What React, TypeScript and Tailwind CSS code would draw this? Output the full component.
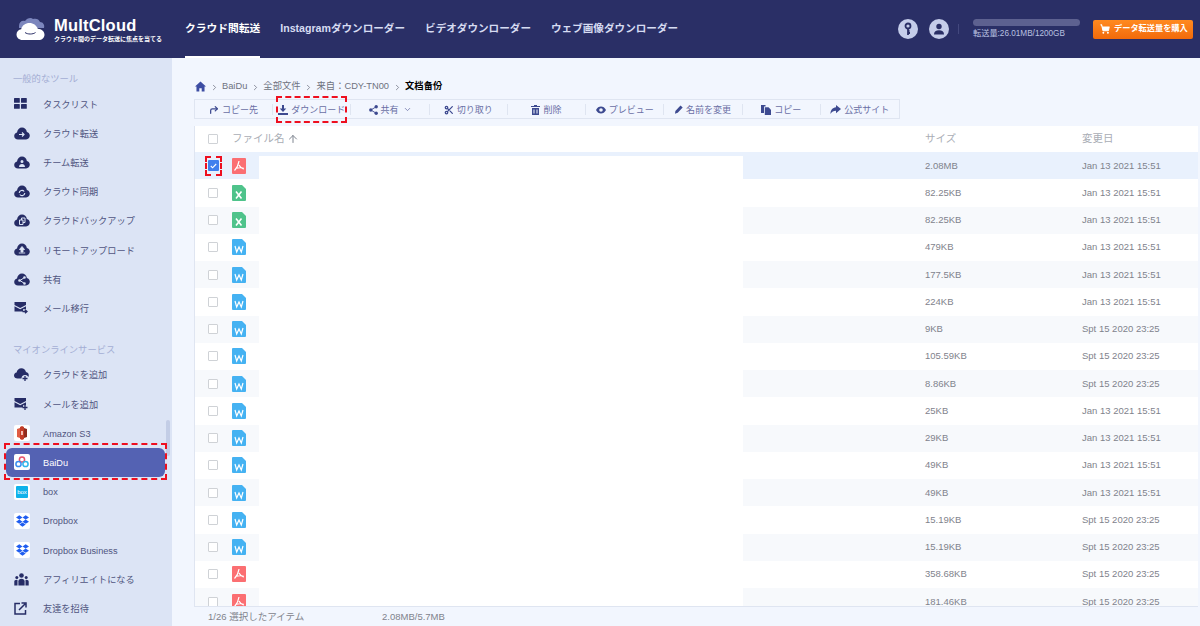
import { ArrowUp, ChevronDown, ChevronRight, CornerUpRight, Scissors, ShoppingCart } from "lucide-react";

const font = "font-['Liberation_Sans','Noto_Sans_CJK_JP',sans-serif]";

const CloudBase = ({ children }: { children?: React.ReactNode }) => (
  <svg width="16" height="13" viewBox="0 0 16 13" className="shrink-0">
    <path d="M4 12.5C1.8 12.5 0.2 11 0.2 9c0-1.8 1.2-3.1 2.8-3.4C3.4 2.6 5.4 0.6 8 0.6c2.500 0 4.400 1.800 4.900 4.300 1.700 0.300 2.900 1.900 2.900 3.700 0 2.200-1.600 3.900-3.700 3.900z" fill="#262c66" />
    {children}
  </svg>
);

const GridIcon = () => (
  <svg width="13" height="11" viewBox="0 0 13 11">
    <rect x="0" y="0" width="5.800" height="4.800" rx="0.600" fill="#262c66" />
    <rect x="7" y="0" width="5.800" height="4.800" rx="0.600" fill="#262c66" />
    <rect x="0" y="6" width="5.800" height="4.800" rx="0.600" fill="#262c66" />
    <rect x="7" y="6" width="5.800" height="4.800" rx="0.600" fill="#262c66" />
  </svg>
);

const MailIcon = ({ plus }: { plus?: boolean }) => (
  <svg width="14" height="14" viewBox="0 0 14 14">
    <path d="M0.500 1h11.500v3L6.200 7 0.500 4z" fill="#262c66" />
    <path d="M0.500 5.200l5.700 3 5.800-3v3H9v2.300H0.500z" fill="#262c66" />
    <path d={plus ? "M11 8v5M8.500 10.500h5" : "M8.500 10.500h4.500M11 8.700l2 1.800-2 1.800"} stroke="#262c66" strokeWidth="1.300" fill="none" />
  </svg>
);

const PeopleIcon = () => (
  <svg width="15" height="13" viewBox="0 0 15 13" fill="#262c66">
    <circle cx="7.500" cy="2.500" r="2.300" />
    <circle cx="2.800" cy="4.400" r="1.500" />
    <circle cx="12.200" cy="4.400" r="1.500" />
    <path d="M4.400 12.500V8.300c0-1.500 1.300-2.500 3.100-2.500s3.100 1 3.100 2.500v4.200z" />
    <path d="M0.300 12.500V8.600c0-1.100 0.900-1.800 2.600-1.800l0.600 0.100v5.600zM14.700 12.500V8.600c0-1.100-0.900-1.800-2.600-1.800l-0.600 0.100v5.600z" />
  </svg>
);

const InviteIcon = () => (
  <svg width="13" height="13" viewBox="0 0 13 13" fill="none" stroke="#262c66" strokeWidth="1.500">
    <path d="M6 1.500H1v10.500h10.500V8" />
    <path d="M5 8l6-6M7.500 1h4.500v4.500" />
  </svg>
);

const AmazonIcon = () => (
  <svg width="12" height="14" viewBox="0 0 12 14">
    <path d="M1 3l3-1v10l-3-1z" fill="#e05c44" />
    <path d="M11 3L8 2v10l3-1z" fill="#8f2c1d" />
    <path d="M4 1l2-1 2 1v12l-2 1-2-1z" fill="#c33c27" />
    <rect x="5" y="5" width="2" height="4" fill="#f3c0b5" />
  </svg>
);

const BaiduIcon = () => (
  <svg width="14" height="12" viewBox="0 0 14 12" fill="none" strokeWidth="1.500">
    <circle cx="7" cy="3.500" r="2.600" stroke="#e9546b" />
    <circle cx="3.500" cy="8" r="2.600" stroke="#3a8df0" />
    <circle cx="10.500" cy="8" r="2.600" stroke="#2fb6ea" />
  </svg>
);

const BoxIcon = () => (
  <div className="w-[12px] h-[12px] rounded-[1px] bg-[#10b2ea] flex items-center justify-center text-white text-[6px] leading-none">box</div>
);

const DropboxIcon = () => (
  <svg width="13" height="12" viewBox="0 0 13 12" fill="#1f5df0">
    <path d="M3.300 0.300L0 2.500l3.300 2.100 3.200-2.100zM9.700 0.300L6.500 2.500l3.200 2.100L13 2.500zM0 6.700l3.300 2.100 3.200-2.100-3.200-2.100zM9.700 4.600L6.500 6.700l3.200 2.100L13 6.700zM3.300 9.500l3.200 2.200 3.200-2.200-3.200-2.100z" />
  </svg>
);

const Tile = ({ children }: { children: React.ReactNode }) => (
  <div className="w-[16px] h-[16px] rounded-[2px] bg-white flex items-center justify-center">{children}</div>
);

const CloudGlyph = ({ kind }: { kind: string }) => (
  <CloudBase>
    {kind === "transfer" && <path d="M5 7.500h5M8 5.500l2 2-2 2" stroke="#dce4f5" strokeWidth="1.200" fill="none" />}
    {kind === "team" && <path d="M8 4a1.500 1.500 0 1 0 0 3 1.500 1.500 0 0 0 0-3zM5 11c0-2 1.300-3 3-3s3 1 3 3z" fill="#dce4f5" />}
    {kind === "sync" && <path d="M5.200 8a2.800 2.800 0 0 1 5-1.500M10.800 8a2.800 2.800 0 0 1-5 1.500" stroke="#dce4f5" strokeWidth="1.100" fill="none" />}
    {kind === "backup" && <path d="M5.500 6h3.500v4.500H5.500zM7.500 6V4h3.500v4.500H9" stroke="#dce4f5" strokeWidth="1" fill="none" />}
    {kind === "upload" && <path d="M8 3.500l2.500 3h-1.500v2.500H7V6.500H5.500zM4.800 10h6.400" stroke="#dce4f5" strokeWidth="0.900" fill="#dce4f5" />}
    {kind === "share" && <path d="M10.500 4.500L6 7.500l4.500 3" stroke="#dce4f5" strokeWidth="1" fill="none" />}
    {kind === "share" && <path d="M10.500 3.200a1.300 1.300 0 1 0 0 2.600 1.300 1.300 0 0 0 0-2.600zM5.500 6.200a1.300 1.300 0 1 0 0 2.600 1.300 1.300 0 0 0 0-2.600zM10.500 9.200a1.300 1.300 0 1 0 0 2.600 1.300 1.300 0 0 0 0-2.600z" fill="#dce4f5" />}
  </CloudBase>
);

const AddCloudIcon = () => (
  <svg width="15" height="14" viewBox="0 0 15 14">
    <path d="M3.500 10.500C1.500 10.500 0 9.200 0 7.400c0-1.600 1.100-2.800 2.600-3C3 2 5 0.300 7.400 0.300c2.300 0 4.100 1.500 4.600 3.700 1.600 0.300 2.800 1.600 2.800 3.300 0 1.800-1.400 3.200-3.200 3.200z" fill="#262c66" />
    <circle cx="11" cy="10.500" r="3.500" fill="#dce4f5" />
    <path d="M11 8v5M8.500 10.500h5" stroke="#262c66" strokeWidth="1.300" />
  </svg>
);

const tools = [
  { label: "タスクリスト", icon: <GridIcon /> },
  { label: "クラウド転送", icon: <CloudGlyph kind="transfer" /> },
  { label: "チーム転送", icon: <CloudGlyph kind="team" /> },
  { label: "クラウド同期", icon: <CloudGlyph kind="sync" /> },
  { label: "クラウドバックアップ", icon: <CloudGlyph kind="backup" /> },
  { label: "リモートアップロード", icon: <CloudGlyph kind="upload" /> },
  { label: "共有", icon: <CloudGlyph kind="share" /> },
  { label: "メール移行", icon: <MailIcon /> },
];

const services = [
  { label: "クラウドを追加", icon: <AddCloudIcon /> },
  { label: "メールを追加", icon: <MailIcon plus /> },
  { label: "Amazon S3", icon: <Tile><AmazonIcon /></Tile> },
  { label: "BaiDu", icon: <Tile><BaiduIcon /></Tile>, active: true },
  { label: "box", icon: <Tile><BoxIcon /></Tile> },
  { label: "Dropbox", icon: <Tile><DropboxIcon /></Tile> },
  { label: "Dropbox Business", icon: <Tile><DropboxIcon /></Tile> },
  { label: "アフィリエイトになる", icon: <PeopleIcon /> },
  { label: "友達を招待", icon: <InviteIcon /> },
];

const SideItem = ({ label, icon, active }: { label: string; icon: React.ReactNode; active?: boolean }) => (
  <div className="h-[29.2px] flex items-center pl-[6px] pr-[7px]">
    <div className={`flex items-center w-full h-[29px] rounded-[6px] ${active ? "bg-[#5462b3] text-white" : "text-[#50557f]"}`}>
      <div className="w-[37px] pl-[8px] flex justify-start shrink-0">{icon}</div>
      <span className="text-[9.200px] pt-[3px] whitespace-nowrap">{label}</span>
    </div>
  </div>
);

const DownloadIcon = () => (
  <svg width="10" height="10" viewBox="0 0 10 10" fill="currentColor">
    <path d="M4 0h2v3.500h2.300L5 7 1.700 3.500H4zM0 8h10v2H0z" />
  </svg>
);

const ShareIcon = () => (
  <svg width="9" height="10" viewBox="0 0 9 10" fill="currentColor">
    <circle cx="7.200" cy="1.800" r="1.700" />
    <circle cx="1.800" cy="5" r="1.700" />
    <circle cx="7.200" cy="8.200" r="1.700" />
    <path d="M7.200 1.800L1.800 5l5.400 3.200" fill="none" stroke="currentColor" strokeWidth="0.900" />
  </svg>
);

const TrashIcon = () => (
  <svg width="9" height="10" viewBox="0 0 9 10" fill="currentColor">
    <path d="M3 0h3v1h3v1H0V1h3z" />
    <path fillRule="evenodd" d="M1 3h7v7H1zM2.500 4.500v4h1v-4zM5.500 4.500v4h1v-4z" />
  </svg>
);

const EyeIcon = () => (
  <svg width="10" height="8" viewBox="0 0 10 8" fill="currentColor">
    <path fillRule="evenodd" d="M0 4c1.200-2.400 3-3.500 5-3.500S8.800 1.600 10 4C8.800 6.400 7 7.500 5 7.500S1.200 6.400 0 4zM5 2.200a1.800 1.800 0 1 0 0 3.600 1.800 1.800 0 0 0 0-3.600z" />
  </svg>
);

const PencilIcon = () => (
  <svg width="8" height="9" viewBox="0 0 8 9" fill="currentColor">
    <path d="M5.500 0.500L7.700 2.400 2.700 7.800 0 8.800 0.400 6z" />
  </svg>
);

const CopyIcon = () => (
  <svg width="10" height="10" viewBox="0 0 10 10" fill="currentColor">
    <path d="M0 0h4.500v1.500H3V8H0z" />
    <path d="M3.800 2.200h3.700L10 4.800V10H3.800z" />
  </svg>
);

const SiteIcon = () => (
  <svg width="11" height="9" viewBox="0 0 11 9" fill="currentColor">
    <path d="M6 0l5 4-5 4.200V5.800C3.600 5.800 1.800 6.800 0.500 9c0-3.800 2-6.400 5.500-6.700z" />
  </svg>
);

const actions = [
  { label: "コピー先", icon: <CornerUpRight size={10} strokeWidth={3} /> },
  { label: "ダウンロード", icon: <DownloadIcon /> },
  { label: "共有", icon: <ShareIcon />, caret: true },
  { label: "切り取り", icon: <Scissors size={10} strokeWidth={3} /> },
  { label: "削除", icon: <TrashIcon /> },
  { label: "プレビュー", icon: <EyeIcon /> },
  { label: "名前を変更", icon: <PencilIcon /> },
  { label: "コピー", icon: <CopyIcon /> },
  { label: "公式サイト", icon: <SiteIcon /> },
];

const files = [
  { t: "pdf", size: "2.08MB", date: "Jan 13 2021 15:51" },
  { t: "xls", size: "82.25KB", date: "Jan 13 2021 15:51" },
  { t: "xls", size: "82.25KB", date: "Jan 13 2021 15:51" },
  { t: "doc", size: "479KB", date: "Jan 13 2021 15:51" },
  { t: "doc", size: "177.5KB", date: "Jan 13 2021 15:51" },
  { t: "doc", size: "224KB", date: "Jan 13 2021 15:51" },
  { t: "doc", size: "9KB", date: "Spt 15 2020 23:25" },
  { t: "doc", size: "105.59KB", date: "Spt 15 2020 23:25" },
  { t: "doc", size: "8.86KB", date: "Spt 15 2020 23:25" },
  { t: "doc", size: "25KB", date: "Jan 13 2021 15:51" },
  { t: "doc", size: "29KB", date: "Jan 13 2021 15:51" },
  { t: "doc", size: "49KB", date: "Jan 13 2021 15:51" },
  { t: "doc", size: "49KB", date: "Jan 13 2021 15:51" },
  { t: "doc", size: "15.19KB", date: "Spt 15 2020 23:25" },
  { t: "doc", size: "15.19KB", date: "Spt 15 2020 23:25" },
  { t: "pdf", size: "358.68KB", date: "Spt 15 2020 23:25" },
  { t: "pdf", size: "181.46KB", date: "Spt 15 2020 23:25" },
];

const FileIcon = ({ t }: { t: string }) => {
  const color = t === "pdf" ? "#fb6f72" : t === "xls" ? "#4fc38b" : "#45b2f2";
  return (
    <svg width="14" height="16" viewBox="0 0 14 16" className="shrink-0">
      <path d={t === "pdf" ? "M0 1a1 1 0 0 1 1-1h12a1 1 0 0 1 1 1v14a1 1 0 0 1-1 1H1a1 1 0 0 1-1-1z" : "M0 1a1 1 0 0 1 1-1h9l4 4v11a1 1 0 0 1-1 1H1a1 1 0 0 1-1-1z"} fill={color} />
      {t === "pdf" && <path d="M7 3c-0.500 3-2 7-4.500 9.500M7 7c1 2 2.500 3.500 5 4M3.500 10.500c2.500-0.800 5-1 8-0.500" stroke="#fff" strokeWidth="1.200" fill="none" />}
      {t === "xls" && <path d="M4 6.500l5.500 7M9.500 6.500l-5.500 7" stroke="#fff" strokeWidth="1.600" fill="none" />}
      {t === "doc" && <path d="M3 7l1.700 6L7 8l2.300 5L11 7" stroke="#fff" strokeWidth="1.200" fill="none" />}
    </svg>
  );
};

const Check = ({ on }: { on?: boolean }) =>
  on ? (
    <div className="w-[11px] h-[11px] rounded-[1px] bg-[#3f80ee] flex items-center justify-center">
      <svg width="7" height="6" viewBox="0 0 7 6"><path d="M0.800 3l1.800 1.800L6.200 1" stroke="#fff" strokeWidth="1.100" fill="none" /></svg>
    </div>
  ) : (
    <div className="w-[10px] h-[10px] border border-[#cfd2d6] rounded-[1px] bg-white" />
  );

export default function App() {
  return (
    <div className={`w-[1200px] h-[626px] overflow-hidden flex flex-col bg-[#f2f6fe] ${font}`}>
      <header className="h-[58px] shrink-0 bg-[#2a2f66] flex items-center text-white">
        <div className="w-[172px] flex items-center pl-[16px] shrink-0">
          <svg width="30" height="26" viewBox="0 0 30 26" className="shrink-0">
            <path d="M3 10C3 6 6 4 9 5c2-3 6-4 8-2 3-1 6 0 7 3 3 0 5 3 4 6H3z" fill="#7c86bd" />
            <path d="M6.500 24C3 24 0.500 21.500 0.500 18.500c0-2.800 2-5 4.700-5.300C6 9.500 9.500 7 13.500 7c3.800 0 7 2.300 8.300 5.800 3.500 0.200 6.700 2.500 6.700 5.900 0 3-2.500 5.300-5.800 5.300z" fill="#fff" />
            <path d="M9 16.500c2.500 2 8 2 10.500 0" stroke="#2a2f66" strokeWidth="1" fill="none" />
          </svg>
          <div className="ml-[8px] flex flex-col mt-[1px]">
            <span className="text-[16.500px] leading-[19px] font-bold tracking-[0.200px]">MultCloud</span>
            <span className="text-[6px] leading-[8px] font-bold whitespace-nowrap">クラウド間のデータ転送に焦点を当てる</span>
          </div>
        </div>
        <nav className="flex items-center h-full pl-[13px] text-[10.600px] text-[#d6dcf2] font-bold">
          <div className="h-full flex items-center border-b-2 border-white text-white text-[10.750px] whitespace-nowrap mr-[20px]">クラウド間転送</div>
          <span className="whitespace-nowrap mr-[20px]">Instagramダウンローダー</span>
          <span className="whitespace-nowrap mr-[20px]">ビデオダウンローダー</span>
          <span className="whitespace-nowrap">ウェブ画像ダウンローダー</span>
        </nav>
        <div className="ml-auto flex items-center pr-[7px]">
          <div className="w-[20px] h-[20px] rounded-full bg-[#c5cdea] flex items-center justify-center mr-[11px]">
            <svg width="10" height="14" viewBox="0 0 10 14" fill="none" stroke="#2a2f66" strokeWidth="1.800">
              <circle cx="5" cy="4" r="2.500" />
              <path d="M5 6.500V13M5 11h2M5 9h1.500" />
            </svg>
          </div>
          <div className="w-[20px] h-[20px] rounded-full bg-[#c5cdea] flex items-center justify-center">
            <svg width="12" height="12" viewBox="0 0 12 12" fill="#2a2f66">
              <circle cx="6" cy="3.500" r="2.700" />
              <path d="M1 11.500c0-3 2-4.300 5-4.300s5 1.300 5 4.300z" />
            </svg>
          </div>
          <div className="w-px h-[10px] bg-[#43487e] ml-[9px] mr-[14px]" />
          <div className="w-[107px] mr-[13px] flex flex-col">
            <div className="h-[7px] rounded-full bg-[#5d6190]" />
            <span className="text-[8.200px] leading-[12px] mt-[2px] text-[#b9c1e0] whitespace-nowrap">転送量:26.01MB/1200GB</span>
          </div>
          <div className="w-[100px] h-[19px] rounded-[2px] bg-gradient-to-b from-[#ff8a1f] to-[#f26a0a] flex items-center pl-[7px] text-[8.200px] font-bold whitespace-nowrap">
            <ShoppingCart size={10} strokeWidth={2.500} fill="#fff" className="mr-[4px] shrink-0" />
            データ転送量を購入
          </div>
        </div>
      </header>
      <div className="flex flex-1 min-h-0">
        <aside className="relative w-[172px] shrink-0 bg-[#dce4f5] overflow-hidden">
          <div className="mt-[12px] pl-[13px] pt-[3px] h-[16px] flex items-center text-[9.300px] text-[#a4aed4]">一般的なツール</div>
          <div className="mt-[3.400px]">
            {tools.map((item) => <SideItem key={item.label} {...item} />)}
          </div>
          <div className="mt-[19px] pl-[13px] pt-[3px] h-[16px] flex items-center text-[9.300px] text-[#a4aed4]">マイオンラインサービス</div>
          <div className="mt-[2.400px]">
            {services.map((item) => <SideItem key={item.label} {...item} />)}
          </div>
          <div className="absolute left-[166px] top-[362px] w-[4px] h-[36px] rounded-full bg-[#c3cde6]" />
          <div className="absolute left-[4px] top-[385px] w-[163px] h-[37px] border-2 border-dashed border-[#ee0f1f]" />
        </aside>
        <main className="relative flex-1 min-w-0 pl-[22px] pr-[2px] flex flex-col">
          <div className="h-[41px] pt-[17px] flex items-center text-[9.300px] text-[#6e7280] whitespace-nowrap">
            <svg width="11" height="11" viewBox="0 0 12 11" fill="#3d4da3" className="ml-[1px] shrink-0 -mt-[2px]">
              <path d="M6 0l6 5.500h-1.600V11H7.300V7.400H4.700V11H1.600V5.500H0z" />
            </svg>
            {["BaiDu", "全部文件", "来自\uFF1ACDY-TN00"].map((c) => (
              <span key={c} className="flex items-center">
                <ChevronRight size={9} className="mx-[3.500px]" />
                {c}
              </span>
            ))}
            <ChevronRight size={9} className="mx-[3.500px]" />
            <span className="font-bold text-black">文档备份</span>
          </div>
          <div className="w-[706px] h-[20px] border border-[#dfe5f1] grid grid-cols-9 items-center shrink-0">
            {actions.map((a, i) => (
              <div key={a.label} className={`flex items-center justify-center h-[11px] text-[9px] text-[#6a6fa5] whitespace-nowrap ${i < 8 ? "border-r border-[#dfe5f1]" : ""}`}>
                <span className="text-[#3d4a90] mr-[3px] mt-[1px]">{a.icon}</span>
                <span className="mt-[4px]">{a.label}</span>
                {a.caret && <ChevronDown size={9} className="ml-[4px]" />}
              </div>
            ))}
          </div>
          <div className="relative mt-[7px] flex-1 min-h-0 bg-white border-l border-[#dfe5f1] overflow-hidden">
            <div className="h-[26px] flex items-center text-[#a9adb5] text-[10.500px]">
              <div className="w-[37px] pl-[13px]"><Check /></div>
              <span>ファイル名</span>
              <ArrowUp size={12} strokeWidth={2} className="ml-[2px] text-[#7f8590]" />
              <span className="absolute left-[730px]">サイズ</span>
              <span className="absolute left-[887px]">変更日</span>
            </div>
            {files.map((f, i) => (
              <div key={i} className={`h-[27.250px] flex items-center text-[9.500px] text-[#7f838c] ${i === 0 ? "bg-[#e9f1fd]" : i % 2 === 0 ? "bg-[#f7f9fc]" : "bg-white"}`}>
                <div className="w-[37px] pl-[13px]"><Check on={i === 0} /></div>
                <FileIcon t={f.t} />
                <span className="absolute left-[730px]">{f.size}</span>
                <span className="absolute left-[887px]">{f.date}</span>
              </div>
            ))}
            <div className="absolute left-[64px] top-[30px] w-[484px] h-[460px] bg-white" />
          </div>
          <div className="h-[20px] shrink-0 border-t border-[#dfe5f1] flex items-center pl-[14px] pt-[2px] text-[9.500px] text-[#7f838c] whitespace-nowrap">
            <span className="w-[174px]">1/26 選択したアイテム</span>
            <span>2.08MB/5.7MB</span>
          </div>
          <div className="absolute left-[104px] top-[38px] w-[71px] h-[27px] border-2 border-dashed border-[#ee0f1f]" />
          <div className="absolute left-[33px] top-[98px] w-[17px] h-[20px] border-2 border-dashed border-[#ee0f1f]" />
        </main>
      </div>
    </div>
  );
}
